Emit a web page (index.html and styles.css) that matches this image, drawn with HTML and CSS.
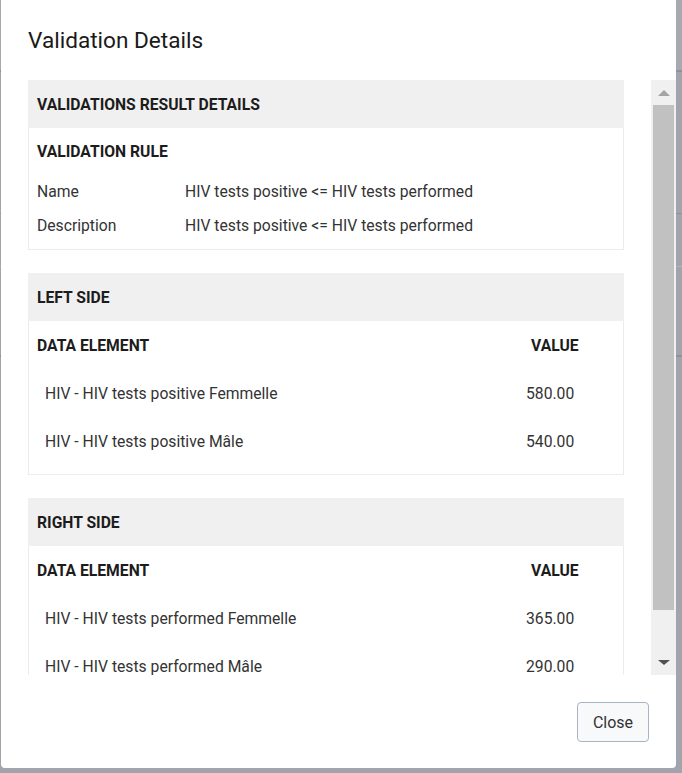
FILE: index.html
```html
<!DOCTYPE html>
<html lang="en">
<head>
<meta charset="utf-8">
<title>Validation Details</title>
<link rel="stylesheet" href="styles.css">
</head>
<body>
<div class="modal">
  <div class="modal-title">Validation Details</div>
  <div class="scroll-wrap">
    <div class="scroll-content">
      <section class="card">
        <div class="card-header">VALIDATIONS RESULT DETAILS</div>
        <div class="card-body rule-body">
          <div class="rule-title">VALIDATION RULE</div>
          <div class="kv">
            <div class="kv-label">Name</div>
            <div class="kv-value">HIV tests positive &lt;= HIV tests performed</div>
          </div>
          <div class="kv">
            <div class="kv-label">Description</div>
            <div class="kv-value">HIV tests positive &lt;= HIV tests performed</div>
          </div>
        </div>
      </section>

      <section class="card">
        <div class="card-header">LEFT SIDE</div>
        <div class="card-body table-body">
          <div class="trow thead">
            <div class="c-name">DATA ELEMENT</div>
            <div class="c-val">VALUE</div>
          </div>
          <div class="trow">
            <div class="c-name">HIV - HIV tests positive Femmelle</div>
            <div class="c-val">580.00</div>
          </div>
          <div class="trow">
            <div class="c-name">HIV - HIV tests positive Mâle</div>
            <div class="c-val">540.00</div>
          </div>
        </div>
      </section>

      <section class="card">
        <div class="card-header">RIGHT SIDE</div>
        <div class="card-body table-body">
          <div class="trow thead">
            <div class="c-name">DATA ELEMENT</div>
            <div class="c-val">VALUE</div>
          </div>
          <div class="trow">
            <div class="c-name">HIV - HIV tests performed Femmelle</div>
            <div class="c-val">365.00</div>
          </div>
          <div class="trow">
            <div class="c-name">HIV - HIV tests performed Mâle</div>
            <div class="c-val">290.00</div>
          </div>
        </div>
      </section>
    </div>
    <div class="scrollbar">
      <div class="sb-btn">
        <svg width="12" height="6" viewBox="0 0 12 6"><polygon points="0,6 12,6 6,0" fill="#a3a3a3"/></svg>
      </div>
      <div class="sb-track"><div class="sb-thumb"></div></div>
      <div class="sb-btn">
        <svg width="12" height="5" viewBox="0 0 12 5"><polygon points="0,0 12,0 6,5" fill="#505050"/></svg>
      </div>
    </div>
  </div>
  <div class="modal-footer">
    <button class="btn-close" type="button">Close</button>
  </div>
</div>
</body>
</html>
```

FILE: styles.css
```css
html, body {
  margin: 0;
  padding: 0;
}

body {
  width: 682px;
  height: 773px;
  overflow: hidden;
  font-family: Roboto, "Noto Sans", "Liberation Sans", sans-serif;
  background-color: #a1a4ac;
  background-image: linear-gradient(to bottom,
    #a6a9b0 0, #a6a9b0 70px,
    #8f9299 70px, #8f9299 72px,
    #a1a4ac 72px, #a1a4ac 213px,
    #8f9299 213px, #8f9299 214px,
    #a1a4ac 214px, #a1a4ac 266px,
    #b3b5bb 266px, #b3b5bb 267px,
    #a1a4ac 267px, #a1a4ac 355px,
    #8f9299 355px, #8f9299 357px,
    #a1a4ac 357px, #a1a4ac 100%);
}

.modal {
  margin-left: 1px;
  width: 675px;
  height: 768px;
  background: #ffffff;
  border-radius: 0 0 4px 4px;
  display: flex;
  flex-direction: column;
  overflow: hidden;
}

.modal-title {
  height: 80px;
  flex: none;
  display: flex;
  align-items: center;
  padding-left: 27px;
  font-size: 22.6px;
  font-weight: 400;
  color: #1a1a1a;
  box-sizing: border-box;
}

.scroll-wrap {
  height: 595px;
  flex: none;
  display: flex;
}

.scroll-content {
  flex: 1;
  overflow: hidden;
  padding: 0 27px;
}

.card + .card {
  margin-top: 23px;
}

.card-header {
  height: 48px;
  background: #f0f0f0;
  display: flex;
  align-items: center;
  padding-left: 9px;
  padding-top: 1px;
  box-sizing: border-box;
  font-size: 15.7px;
  font-weight: 700;
  color: #1c1c1c;
}

.card-body {
  border: 1px solid #ececec;
  border-top: none;
  font-size: 15.7px;
  color: #333333;
}

.rule-body {
  padding: 0 8px 7px;
}

.rule-title {
  height: 46px;
  display: flex;
  align-items: center;
  padding-top: 1px;
  box-sizing: border-box;
  font-weight: 700;
  color: #1c1c1c;
}

.kv {
  height: 34px;
  display: flex;
  align-items: center;
  padding-top: 1px;
  box-sizing: border-box;
}

.kv-label {
  width: 148px;
  flex: none;
}

.table-body {
  padding-bottom: 9px;
}

.trow {
  height: 48px;
  display: grid;
  grid-template-columns: 1fr 105px;
  align-items: center;
  padding-top: 1px;
  box-sizing: border-box;
}

.trow .c-name {
  padding-left: 16px;
}

.trow .c-val {
  padding-left: 8px;
}

.trow.thead {
  font-weight: 700;
  color: #1c1c1c;
}

.trow.thead .c-name {
  padding-left: 8px;
}

.trow.thead .c-val {
  padding-left: 13px;
}

.scrollbar {
  width: 25px;
  flex: none;
  background: #f0f0f0;
  display: flex;
  flex-direction: column;
}

.sb-btn {
  height: 25px;
  flex: none;
  display: flex;
  align-items: center;
  justify-content: center;
}

.sb-track {
  flex: 1;
  padding: 0 2px;
}

.sb-thumb {
  height: 505px;
  background: #c1c1c1;
}

.modal-footer {
  flex: 1;
  display: flex;
  justify-content: flex-end;
  align-items: flex-start;
  padding: 27px 27px 0 0;
}

.btn-close {
  width: 72px;
  height: 40px;
  border: 1px solid #a9b3c1;
  border-radius: 4px;
  background: #f8f9fb;
  font-family: Roboto, "Noto Sans", "Liberation Sans", sans-serif;
  font-size: 16px;
  color: #333333;
  padding: 0;
  cursor: pointer;
}
```
